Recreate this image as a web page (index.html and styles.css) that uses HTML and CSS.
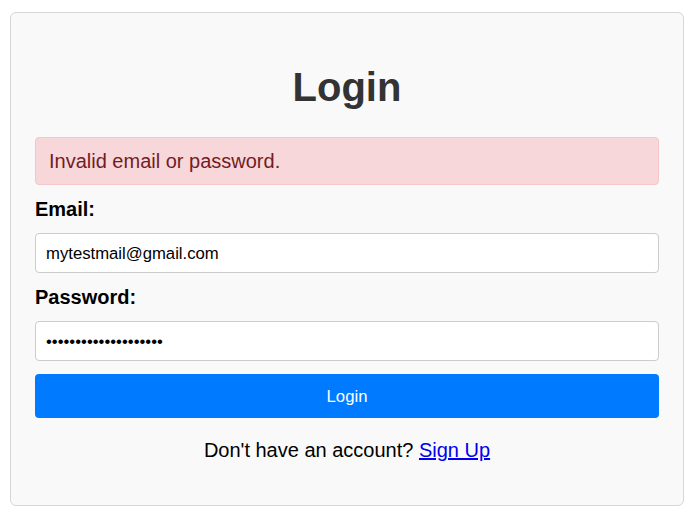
FILE: index.html
```html
<!DOCTYPE html>
<html lang="en">

<head>
    <meta charset="UTF-8">
    <meta name="viewport" content="width=device-width, initial-scale=1.0">
    <title>Login</title>
    <link rel="stylesheet" href="styles.css">
</head>

<body>
    <div class="card">
        <h2 class="title">Login</h2>

        <div class="alert">Invalid email or password.</div>

        <form class="form">
            <label for="email">Email:</label>
            <input type="email" id="email" value="mytestmail@gmail.com">
            <label for="password">Password:</label>
            <input type="password" id="password" value="mypassword1234567890">
            <button type="button" class="btn">Login</button>
        </form>

        <p class="footer">Don't have an account? <a href="#">Sign Up</a></p>
    </div>
</body>

</html>
```

FILE: styles.css
```css
body {
    margin: 0;
    background-color: #fff;
    font-family: "Liberation Sans", Arial, sans-serif;
}

.card {
    width: 624px;
    margin: 12px 0 0 10px;
    padding: 24px;
    background-color: #f9f9f9;
    border: 1px solid #d6d6d6;
    border-radius: 6px;
}

.title {
    margin: 27px 0 27px;
    font-size: 40px;
    line-height: 46px;
    text-align: center;
    color: #333;
}

.alert {
    padding: 12px 13px;
    font-size: 20px;
    line-height: 22px;
    color: #721c24;
    background-color: #f8d7da;
    border: 1px solid #f5c6cb;
    border-radius: 4px;
    margin-bottom: 13px;
}

.form {
    display: flex;
    flex-direction: column;
    gap: 12px;
}

.form label {
    font-size: 20px;
    line-height: 23px;
    font-weight: bold;
    color: #000;
}

.form input {
    height: 40px;
    box-sizing: border-box;
    margin: 0 0 1px;
    padding: 1px 10px 0;
    font-family: "Liberation Sans", Arial, sans-serif;
    font-size: 16.7px;
    color: #000;
    background-color: #fff;
    border: 1px solid #ccc;
    border-radius: 4px;
}

.btn {
    height: 44px;
    padding-top: 2px;
    font-family: "Liberation Sans", Arial, sans-serif;
    font-size: 16.7px;
    color: #fff;
    background-color: #007bff;
    border: none;
    border-radius: 4px;
}

.footer {
    margin: 21px 0 19px;
    font-size: 20px;
    line-height: 23px;
    text-align: center;
}

.footer a {
    color: #0000ee;
}
```
